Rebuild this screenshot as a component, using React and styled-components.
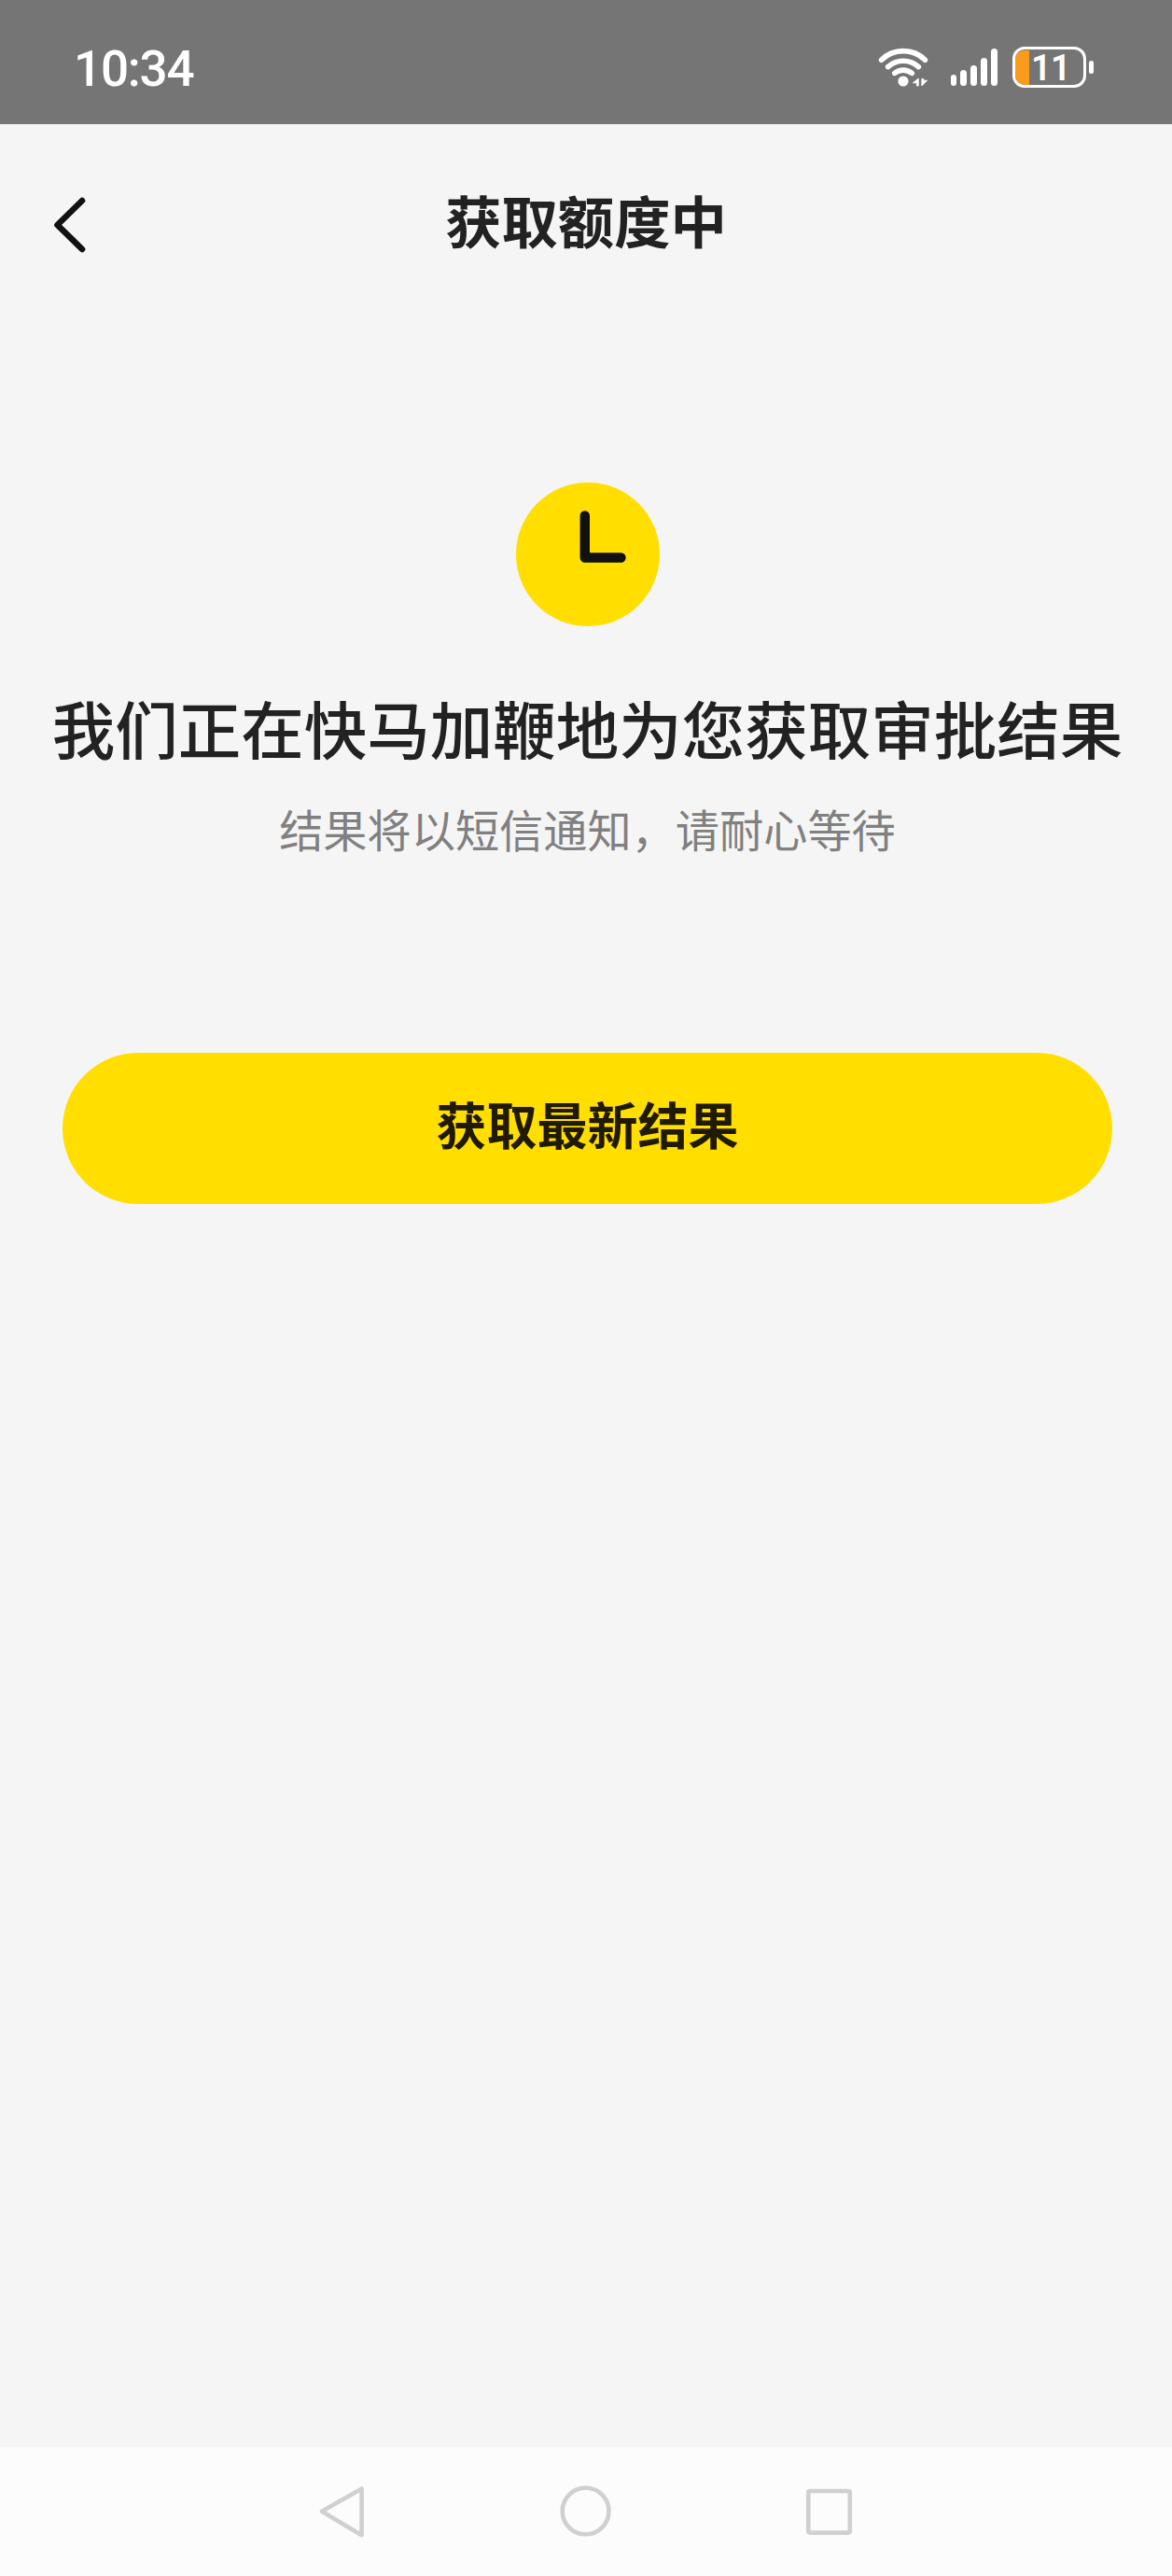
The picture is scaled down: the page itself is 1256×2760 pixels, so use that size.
import React from "react";
import styled, { createGlobalStyle } from "styled-components";

const App = () => {
  return (
    <>
      <GlobalStyle />
      <Screen>
        <StatusBar>
          <Time>10:34</Time>
          <StatusIcons>
            <WifiIcon />
            <SignalIcon />
            <Battery>
              <BatteryBody>
                <BatteryLevel />
                <BatteryText>11</BatteryText>
              </BatteryBody>
              <BatteryCap />
            </Battery>
          </StatusIcons>
        </StatusBar>

        <Header>
          <BackButton aria-label="返回">
            <svg width="40" height="64" viewBox="0 0 40 64" fill="none">
              <path
                d="M34 6L7.5 32L34 58"
                stroke="#111"
                strokeWidth="6.6"
                strokeLinecap="round"
                strokeLinejoin="round"
              />
            </svg>
          </BackButton>
          <Title>获取额度中</Title>
        </Header>

        <Content>
          <ClockIcon />
          <Heading>我们正在快马加鞭地为您获取审批结果</Heading>
          <Hint>结果将以短信通知，请耐心等待</Hint>
          <RefreshButton>获取最新结果</RefreshButton>
        </Content>

        <NavBar>
          <NavButton aria-label="back">
            <svg width="60" height="60" viewBox="0 0 60 60">
              <path d="M7.9 29.8L50.6 5.5V55.2Z" />
            </svg>
          </NavButton>
          <NavButton aria-label="home">
            <svg width="60" height="60" viewBox="0 0 60 60">
              <circle cx="29.6" cy="29.4" r="24.9" />
            </svg>
          </NavButton>
          <NavButton aria-label="recent">
            <svg width="60" height="60" viewBox="0 0 60 60">
              <rect x="7.3" y="8" width="44.5" height="44.6" rx="1.5" />
            </svg>
          </NavButton>
        </NavBar>
      </Screen>
    </>
  );
};

const WifiIcon = () => (
  <svg width="56" height="44" viewBox="0 0 56 44" fill="none">
    <g stroke="#fff" strokeWidth="5.6" strokeLinecap="round">
      <path d="M4.6 14.2A33.5 33.5 0 0 1 51.4 14.2" />
      <path d="M11.6 21.6A24.5 24.5 0 0 1 44.4 21.6" />
      <path d="M18.8 28.4A14.5 14.5 0 0 1 37.2 28.4" />
    </g>
    <circle cx="28" cy="37" r="5.6" fill="#fff" />
    <path
      d="M44.3 34V42H42.4V38.8H38.4ZM47.8 42V34.4H49.8V36.2H53.6Z"
      fill="#fff"
      stroke="#fff"
      strokeWidth="0.8"
      strokeLinejoin="round"
    />
  </svg>
);

const bars = [12.6, 17, 22, 30.4, 40.4];

const SignalIcon = () => (
  <Signal>
    {bars.map((height) => (
      <SignalBar key={height} $height={height} />
    ))}
  </Signal>
);

const ClockIcon = () => (
  <Clock>
    <svg width="154" height="154" viewBox="0 0 154 154" fill="none">
      <path
        d="M73.8 35.5V80.5H112.5"
        stroke="#111"
        strokeWidth="10.4"
        strokeLinecap="round"
        strokeLinejoin="round"
      />
    </svg>
  </Clock>
);

const GlobalStyle = createGlobalStyle`
  body {
    margin: 0;
    background-color: #f5f5f5;
    font-family: "Noto Sans CJK SC", sans-serif;
  }
  button {
    border: none;
    padding: 0;
    background: none;
    font-family: inherit;
  }
  svg {
    display: block;
  }
`;

const Screen = styled.div`
  display: flex;
  flex-direction: column;
  width: 1256px;
  height: 2760px;
  overflow: hidden;
  background-color: #f5f5f5;
`;

const StatusBar = styled.div`
  display: flex;
  justify-content: space-between;
  box-sizing: border-box;
  height: 133px;
  padding: 50px 84px 0 79px;
  background-color: #757575;
  color: #fff;
`;

const Time = styled.span`
  font-family: Roboto, sans-serif;
  font-size: 53px;
  font-weight: 500;
  line-height: 48px;
  letter-spacing: -1.2px;
`;

const StatusIcons = styled.div`
  display: flex;
  height: 44px;
`;

const Signal = styled.div`
  display: flex;
  align-items: flex-end;
  gap: 4px;
  height: 42.4px;
  margin: 0 16px 0 22.5px;
`;

const SignalBar = styled.span`
  width: 6.9px;
  height: ${(props) => props.$height}px;
  border-radius: 4px;
  background-color: #fff;
`;

const Battery = styled.div`
  display: flex;
  align-items: center;
  gap: 3px;
`;

const BatteryBody = styled.div`
  display: flex;
  align-items: center;
  box-sizing: border-box;
  width: 79px;
  height: 44px;
  border: 3.5px solid #fff;
  border-radius: 13px;
  overflow: hidden;
`;

const BatteryLevel = styled.span`
  width: 15px;
  height: 37px;
  border-radius: 9px 0 0 9px;
  background-color: #fb9b1c;
`;

const BatteryText = styled.span`
  margin-left: 2px;
  padding-top: 2px;
  font-family: Roboto, sans-serif;
  font-size: 38px;
  font-weight: 600;
  line-height: 38px;
  letter-spacing: -0.8px;
`;

const BatteryCap = styled.span`
  width: 5px;
  height: 14px;
  border-radius: 3px;
  background-color: #fff;
`;

const Header = styled.header`
  display: grid;
  grid-template-columns: 120px 1fr 120px;
  align-items: center;
  height: 216px;
`;

const BackButton = styled.button`
  margin-left: 54px;
`;

const Title = styled.h1`
  margin: 0;
  padding-bottom: 13px;
  color: #222;
  font-size: 60.3px;
  font-weight: 700;
  line-height: 88px;
  text-align: center;
`;

const Content = styled.main`
  display: flex;
  flex: 1;
  flex-direction: column;
  align-items: center;
  padding: 168px 0 0 3px;
`;

const Clock = styled.div`
  border-radius: 50%;
  background-color: #ffde00;
`;

const Heading = styled.h2`
  margin: 59px 0 0;
  color: #222;
  font-size: 67.5px;
  font-weight: 500;
  line-height: 98px;
  white-space: nowrap;
`;

const Hint = styled.p`
  margin: 25px 0 0;
  color: #808080;
  font-size: 47.2px;
  line-height: 70px;
`;

const RefreshButton = styled.button`
  box-sizing: border-box;
  width: 1125px;
  height: 162px;
  margin-top: 205px;
  padding-bottom: 12px;
  border-radius: 81px;
  background-color: #ffde00;
  color: #1f1a00;
  font-size: 54px;
  font-weight: 700;
`;

const NavBar = styled.nav`
  display: flex;
  justify-content: center;
  gap: 201px;
  height: 138px;
  background-color: #fcfcfc;
`;

const NavButton = styled.button`
  svg {
    fill: none;
    stroke: #d0d0d0;
    stroke-width: 4.6;
    stroke-linejoin: round;
    overflow: visible;
  }
`;

export default App;
